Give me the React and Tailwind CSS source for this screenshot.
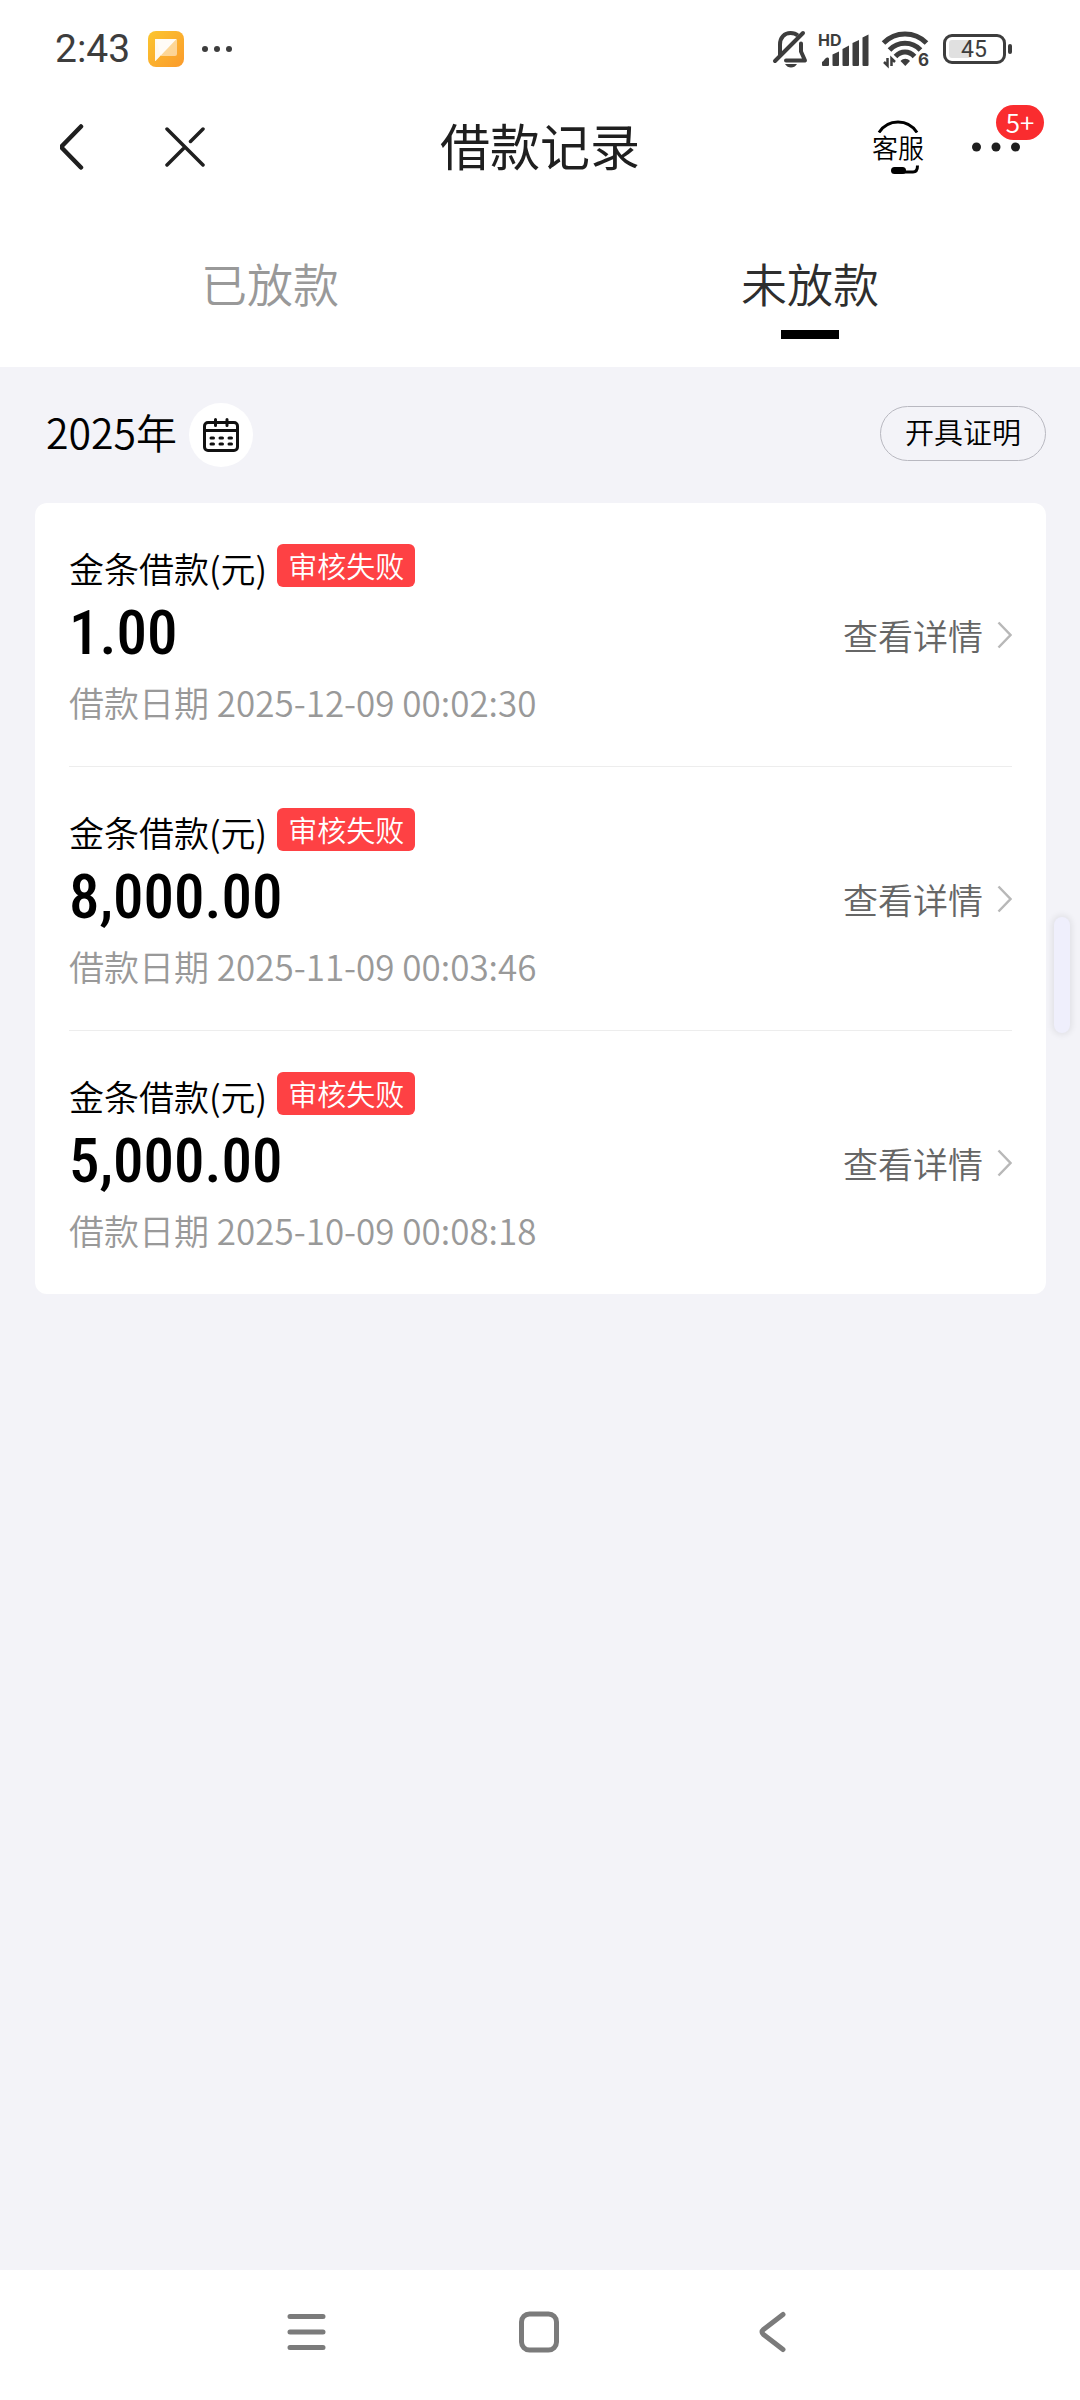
import React, { useState } from 'react';

const TABS = [
  { id: 'paid', label: '已放款' },
  { id: 'unpaid', label: '未放款' },
];

const RECORDS = [
  { id: 1, amount: '1.00', date: '2025-12-09 00:02:30' },
  { id: 2, amount: '8,000.00', date: '2025-11-09 00:03:46' },
  { id: 3, amount: '5,000.00', date: '2025-10-09 00:08:18' },
];

const AppBadgeIcon = () => (
  <svg width="36" height="36" viewBox="0 0 36 36" aria-hidden="true">
    <defs>
      <linearGradient id="note" x1="0" y1="0" x2="1" y2="1">
        <stop offset="0" stopColor="#fbc62f" />
        <stop offset="1" stopColor="#fb9a2c" />
      </linearGradient>
    </defs>
    <rect width="36" height="36" rx="8" fill="url(#note)" />
    <path d="M8 8h20a1 1 0 0 1 1 1v14a2 2 0 0 1-2 2H13z" fill="#fff" fillOpacity="0.5" />
    <path d="M7 8h21.500L7.500 30a.5.5 0 0 1-.5-.5z" fill="#fff" fillOpacity="0.92" />
  </svg>
);

const MutedBell = () => (
  <svg width="34" height="38" viewBox="0 0 34 38" fill="none" stroke="#3d3d3d" strokeWidth="4" className="overflow-visible" aria-hidden="true">
    <path d="M7 25V14.500C7 7.500 11.500 3 17.500 3c3 0 5.500.8 7.300 2.500" />
    <path d="M28 13.500v8L32 30.500H13" strokeLinejoin="round" strokeLinecap="round" />
    <path d="M2 31 30 3" strokeLinecap="round" />
    <path d="M12 34h12c-1.500 2.500-3.500 3.500-6 3.500s-4.500-1-6-3.500z" fill="#3d3d3d" stroke="none" />
  </svg>
);

const Signal = () => (
  <svg width="50" height="36" viewBox="0 0 50 36" fill="#3d3d3d" className="overflow-visible" aria-hidden="true">
    <text x="-1" y="15" fontFamily="Inter, sans-serif" fontSize="16" fontWeight="700">HD</text>
    <path d="M3 31c2-1 3-4 5-4.500 1-.2 2 .3 2 1.500v6a1 1 0 0 1-1 1H4a1 1 0 0 1-1-1z" />
    <path d="M13.500 23.500l6.500-3V34a1 1 0 0 1-1 1h-4.500a1 1 0 0 1-1-1z" />
    <path d="M23.500 18l6.500-3.500V34a1 1 0 0 1-1 1h-4.500a1 1 0 0 1-1-1z" />
    <path d="M33.500 12l6.500-3V34a1 1 0 0 1-1 1h-4.500a1 1 0 0 1-1-1z" />
    <path d="M43.500 6.500l6-3V34a1 1 0 0 1-1 1h-4a1 1 0 0 1-1-1z" />
  </svg>
);

const Wifi = () => (
  <svg width="50" height="38" viewBox="0 0 50 38" fill="none" stroke="#3d3d3d" strokeWidth="5" className="overflow-visible" aria-hidden="true">
    <path d="M2.500 13C14.500 1 33.500 1 45.500 13" />
    <path d="M8.500 20C17 11 31 11 39.500 20" />
    <path d="M14.500 26.500C20 20.500 28 20.500 33.500 26.500" />
    <path d="M19.500 31c3-3 6.500-3 9.500 0l-4.700 5z" fill="#3d3d3d" stroke="none" />
    <path d="M6.500 28v7.500L3 32M10.500 36V28.500l3.500 3.500" strokeWidth="2.500" />
    <text x="37" y="36" fill="#3d3d3d" stroke="none" fontFamily="Inter, sans-serif" fontSize="17" fontWeight="700">6</text>
  </svg>
);

const Battery = () => (
  <svg width="70" height="30" viewBox="0 0 70 30" aria-hidden="true">
    <rect x="6" y="6" width="22" height="18" rx="3" fill="#e0e0e0" />
    <rect x="1.500" y="1.500" width="60" height="27" rx="7.500" fill="none" stroke="#3d3d3d" strokeWidth="3" />
    <rect x="65" y="10" width="4" height="10" rx="2" fill="#3d3d3d" />
    <text x="31" y="23" textAnchor="middle" fill="#3d3d3d" fontFamily="Roboto, sans-serif" fontSize="23" fontWeight="400">45</text>
  </svg>
);

const StatusBar = () => (
  <div className="flex h-[98px] items-center justify-between pl-[55px] pr-[67px] text-[#3d3d3d]">
    <div className="flex items-center gap-[18px]">
      <span className="font-[Roboto,sans-serif] text-[39px] font-normal leading-[48px]">2:43</span>
      <AppBadgeIcon />
      <svg width="30" height="8" viewBox="0 0 30 8" fill="#3d3d3d" aria-hidden="true">
        <circle cx="3" cy="4" r="3" />
        <circle cx="15" cy="4" r="3" />
        <circle cx="27" cy="4" r="3" />
      </svg>
    </div>
    <div className="flex items-center gap-3">
      <MutedBell />
      <Signal />
      <Wifi />
      <Battery />
    </div>
  </div>
);

const Header = () => (
  <header className="grid h-[98px] grid-cols-[1fr_auto_1fr] items-center px-[60px] text-[#1f1f1f]">
    <div className="flex items-center gap-20">
      <button type="button" aria-label="返回">
        <svg width="25" height="46" viewBox="0 0 25 46" fill="none" stroke="currentColor" strokeWidth="4.500" strokeLinecap="round" strokeLinejoin="round">
          <path d="M21 2.500 2.500 21.500q-1.500 1.500 0 3L21 43.500" />
        </svg>
      </button>
      <button type="button" aria-label="关闭">
        <svg width="40" height="40" viewBox="0 0 40 40" fill="none" stroke="currentColor" strokeWidth="3.500" strokeLinecap="round">
          <path d="M2 2l36 36M38 2 25.500 14.500M19 21 2 38" />
        </svg>
      </button>
    </div>
    <h1 className="pb-1.5 text-[50px] font-normal leading-[64px]">借款记录</h1>
    <div className="flex items-center justify-end gap-12">
      <button type="button" className="flex flex-col items-center text-black">
        <svg width="42" height="13" viewBox="0 0 42 13" fill="none" stroke="currentColor" strokeWidth="3" aria-hidden="true">
          <path d="M2 12.500C11-1.500 31-1.500 40 12.500" />
        </svg>
        <span className="pb-1 text-[26px] leading-[28px]">客服</span>
        <svg width="42" height="9" viewBox="0 0 42 9" className="overflow-visible" aria-hidden="true">
          <rect x="14" y="2" width="15" height="7" rx="3.500" fill="currentColor" />
          <path d="M26 7h10q4.500 0 4.500-6.500" fill="none" stroke="currentColor" strokeWidth="3" />
        </svg>
      </button>
      <button type="button" aria-label="更多" className="relative">
        <svg width="48" height="48" viewBox="0 0 48 48" fill="currentColor">
          <circle cx="4.500" cy="24" r="4.500" />
          <circle cx="24" cy="24" r="4.500" />
          <circle cx="43.500" cy="24" r="4.500" />
        </svg>
        <span className="absolute -top-[18px] left-6 h-[35px] w-12 rounded-full bg-[#fa2c2f] text-center text-[26px] leading-[33px] text-white">
          5+
        </span>
      </button>
    </div>
  </header>
);

const Tabs = ({ active, onChange }) => (
  <div role="tablist" className="grid h-[171px] grid-cols-2">
    {TABS.map((tab) => (
      <button
        key={tab.id}
        type="button"
        role="tab"
        aria-selected={active === tab.id}
        onClick={() => onChange(tab.id)}
        className={`flex flex-col items-center gap-[18px] pt-14 text-[46px] leading-[60px] ${
          active === tab.id ? 'text-[#2e2e2e]' : 'text-[#999999]'
        }`}
      >
        {tab.label}
        {active === tab.id && <span className="h-[9px] w-[58px] bg-black" />}
      </button>
    ))}
  </div>
);

const CalendarIcon = () => (
  <svg width="36" height="34" viewBox="0 0 36 34" fill="none" stroke="#111" strokeWidth="3" strokeLinecap="round" aria-hidden="true">
    <rect x="1.500" y="4.500" width="33" height="28" rx="3.500" />
    <path d="M1.500 12.500h33M12.500 1.500v6M24 1.500v6" />
    <path d="M8 20h2.500M17 20h2.500M26 20h2.500M8 26h2.500M17 26h2.500M26 26h2.500" />
  </svg>
);

const RecordItem = ({ record }) => (
  <li className="flex items-center justify-between border-b border-[#ededed] pb-10 pt-[41px] last:border-b-0">
    <div>
      <div className="flex items-start gap-2.5">
        <h2 className="text-[35px] leading-[48px] text-black">金条借款(元)</h2>
        <span className="h-[43px] rounded-md bg-[#fe4144] px-[11px] text-[29px] leading-[43px] text-white">审核失败</span>
      </div>
      <p className="font-['Roboto_Condensed',Roboto,sans-serif] text-[61px] font-medium leading-[82px] text-black">
        {record.amount}
      </p>
      <p className="mt-1 text-[35px] leading-[48px] text-[#999999]">借款日期 {record.date}</p>
    </div>
    <a href="#detail" className="flex items-center gap-3.5 text-[35px] leading-[48px] text-[#666666]">
      查看详情
      <svg width="15" height="28" viewBox="0 0 15 28" fill="none" stroke="#b8b8b8" strokeWidth="2.500" aria-hidden="true">
        <path d="M1.500 1.500 13.500 14 1.500 26.500" />
      </svg>
    </a>
  </li>
);

const SystemNav = () => (
  <nav className="flex h-[130px] items-center justify-center gap-[185px] bg-white pb-1.5">
    <button type="button" aria-label="最近任务">
      <svg width="48" height="48" viewBox="0 0 48 48" stroke="#7b7b7b" strokeWidth="5" strokeLinecap="round">
        <path d="M7 8.500h33M7 24h33M7 39.500h33" />
      </svg>
    </button>
    <button type="button" aria-label="主屏幕">
      <svg width="48" height="48" viewBox="0 0 48 48" fill="none" stroke="#7b7b7b" strokeWidth="5">
        <rect x="5.500" y="6" width="35" height="36" rx="8" />
      </svg>
    </button>
    <button type="button" aria-label="返回上一级">
      <svg width="48" height="48" viewBox="0 0 48 48" fill="none" stroke="#7b7b7b" strokeWidth="5" strokeLinecap="round">
        <path d="M34 6.500 14.500 21.500q-3 2.500 0 5L34 41.500" />
      </svg>
    </button>
  </nav>
);

const App = () => {
  const [tab, setTab] = useState('unpaid');

  return (
    <div className="flex min-h-screen flex-col bg-white font-['Noto_Sans_CJK_SC',sans-serif] font-[350]">
      <StatusBar />
      <Header />
      <Tabs active={tab} onChange={setTab} />

      <main className="relative flex-1 bg-[#f3f3f8] pl-[35px] pr-[34px]">
        <div className="flex h-[136px] items-center justify-between pl-[11px]">
          <div className="flex items-center gap-3">
            <span className="pb-2 text-[41px] leading-[56px] text-black">2025年</span>
            <button type="button" aria-label="选择年份" className="flex h-16 w-16 items-center justify-center rounded-full bg-white">
              <CalendarIcon />
            </button>
          </div>
          <button type="button" className="mb-1 h-[55px] rounded-full border border-[#b8b8c0] px-6 pb-1 text-[29px] leading-[48px] text-black">
            开具证明
          </button>
        </div>

        <ul className="rounded-xl bg-white px-[34px]">
          {RECORDS.map((record) => (
            <RecordItem key={record.id} record={record} />
          ))}
        </ul>

        {/* edge handle of the system sidebar */}
        <div className="absolute right-[10px] top-[550px] h-[116px] w-4 rounded-full bg-[#efeffc] shadow-[0_0_6px_2px_rgba(0,0,0,0.08)]" />
      </main>

      <SystemNav />
    </div>
  );
};

export default App;
